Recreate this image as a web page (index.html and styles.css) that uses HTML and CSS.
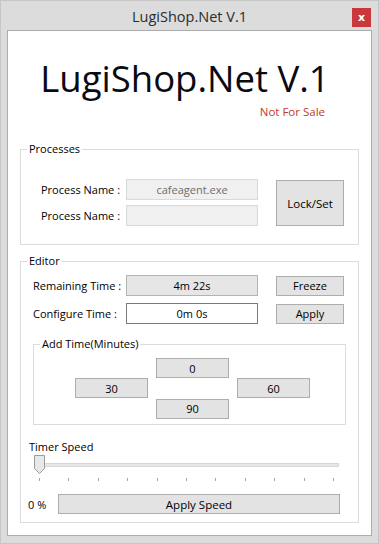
FILE: index.html
```html
<!DOCTYPE html>
<html lang="en">
<head>
    <meta charset="UTF-8">
    <meta name="viewport" content="width=device-width, initial-scale=1.0">
    <title>LugiShop.Net V.1</title>
    <link rel="stylesheet" href="styles.css">
</head>
<body>
    <div class="window">
        <div class="titlebar">
            <span></span>
            <span class="title">LugiShop.Net V.1</span>
            <button class="close">x</button>
        </div>
        <div class="client">
            <div class="brand">
                <h1>LugiShop.Net V.1</h1>
                <p class="note">Not For Sale</p>
            </div>

            <fieldset class="group processes">
                <legend>Processes</legend>
                <div class="proc-grid">
                    <label>Process Name :</label>
                    <input type="text" class="box readonly" value="cafeagent.exe" readonly>
                    <button class="btn lock">Lock/Set</button>
                    <label>Process Name :</label>
                    <input type="text" class="box readonly" value="" readonly>
                </div>
            </fieldset>

            <fieldset class="group editor">
                <legend>Editor</legend>
                <div class="edit-grid">
                    <label>Remaining Time :</label>
                    <input type="text" class="box shaded" value="4m 22s" readonly>
                    <button class="btn">Freeze</button>
                    <label>Configure Time :</label>
                    <input type="text" class="box white" value="0m 0s">
                    <button class="btn">Apply</button>
                </div>

                <fieldset class="group addtime">
                    <legend>Add Time(Minutes)</legend>
                    <div class="time-grid">
                        <button class="btn t0">0</button>
                        <button class="btn t30">30</button>
                        <button class="btn t60">60</button>
                        <button class="btn t90">90</button>
                    </div>
                </fieldset>

                <div class="speed-label">Timer Speed</div>
                <div class="slider">
                    <div class="track"></div>
                    <svg class="thumb" width="11" height="19" viewBox="0 0 11 19">
                        <path d="M0.5 0.5 H10.5 V13.5 L5.5 18.5 L0.5 13.5 Z" fill="#e8e8e8" stroke="#9a9a9a"/>
                    </svg>
                    <div class="ticks">
                        <span></span><span></span><span></span><span></span><span></span><span></span>
                        <span></span><span></span><span></span><span></span><span></span>
                    </div>
                </div>
                <div class="speed-row">
                    <span class="percent">0 %</span>
                    <button class="btn">Apply Speed</button>
                </div>
            </fieldset>
        </div>
    </div>
</body>
</html>
```

FILE: styles.css
```css
* {
    box-sizing: border-box;
}
body {
    margin: 0;
    font-family: "Open Sans", "Noto Sans", sans-serif;
    font-size: 11px;
    color: #000;
    background: #dcdcdc;
}
.window {
    width: 379px;
    height: 544px;
    border: 1px solid #c6c6c6;
    background: #dcdcdc;
    display: flex;
    flex-direction: column;
}
.titlebar {
    height: 29px;
    display: grid;
    grid-template-columns: 1fr auto 1fr;
    align-items: center;
}
.titlebar .title {
    font-size: 14.5px;
    color: #2b2b2b;
    padding-top: 1px;
}
.close {
    justify-self: end;
    width: 19px;
    height: 19px;
    margin: 3px 7px 0 0;
    padding: 0;
    border: none;
    background: #c8383d;
    color: #fff;
    font-family: "DejaVu Sans", sans-serif;
    font-size: 11px;
    font-weight: bold;
    line-height: 17px;
}
.client {
    flex: 1;
    margin: 0 6px 7px 6px;
    border: 1px solid #acacac;
    background: #fff;
}
.brand {
    display: flex;
    flex-direction: column;
    align-items: center;
    padding: 24px 9px 0 0;
}
.brand h1 {
    margin: 0;
    font-weight: 400;
    font-size: 36.5px;
    line-height: 46px;
    color: #0a0a12;
}
.brand .note {
    align-self: flex-end;
    margin: 3px 37px 0 0;
    color: #c0392b;
    font-size: 11.5px;
    line-height: 16px;
}
.group {
    border: 1px solid #dcdcdc;
    margin: 0;
    padding: 0;
    min-width: 0;
}
.group legend {
    padding: 0 2px;
    margin-left: 6px;
    line-height: 16px;
}
.processes {
    margin: 21px 12px 0 12px;
    padding: 22px 0 18px 0;
}
.proc-grid {
    display: grid;
    grid-template-columns: 85px 150px 68px;
    grid-template-rows: 21px 21px;
    row-gap: 5px;
    align-items: center;
    padding-left: 20px;
}
.proc-grid .box {
    width: 132px;
}
.proc-grid .lock {
    grid-column: 3;
    grid-row: 1 / 3;
    height: 46px;
    margin-top: 1px;
    font-size: 11.5px;
}
.box {
    height: 21px;
    width: 100%;
    padding: 0 4px;
    font: inherit;
    text-align: center;
    outline: none;
}
.box.readonly {
    background: #f0f0f0;
    border: 1px solid #d9d9d9;
    color: #6d6d6d;
}
.box.shaded {
    background: #e6e6e6;
    border: 1px solid #b4b4b4;
    color: #000;
}
.box.white {
    background: #fff;
    border: 1px solid #7a7a7a;
    color: #000;
}
.btn {
    height: 20px;
    padding: 0;
    background: #e3e3e3;
    border: 1px solid #adadad;
    font: inherit;
    color: #000;
}
.editor {
    margin: 8px 12px 0 12px;
    padding: 6px 13px 8px 0;
}
.edit-grid {
    display: grid;
    grid-template-columns: 93px 150px 68px;
    grid-template-rows: 21px 21px;
    row-gap: 7px;
    align-items: center;
    padding-left: 12px;
}
.edit-grid .box {
    width: 132px;
}
.addtime {
    margin: 12px 0 0 12px;
    width: 313px;
    padding: 6px 0 5px 0;
}
.time-grid {
    display: grid;
    grid-template-columns: 73px 73px 73px;
    grid-template-rows: repeat(6, 10.2px);
    column-gap: 8px;
    padding-left: 41px;
}
.time-grid .btn {
    height: 20px;
}
.t0 { grid-column: 2; grid-row: 1 / 3; }
.t30 { grid-column: 1; grid-row: 3 / 5; }
.t60 { grid-column: 3; grid-row: 3 / 5; }
.t90 { grid-column: 2; grid-row: 5 / 7; }
.speed-label {
    margin: 14px 0 0 8px;
    line-height: 16px;
}
.slider {
    position: relative;
    margin: 0 0 0 13px;
    padding-top: 8px;
    width: 306px;
    height: 26px;
}
.track {
    margin-left: 5px;
    width: 300px;
    height: 4px;
    background: #e7e7e7;
    border: 1px solid #d6d6d6;
}
.thumb {
    position: absolute;
    left: 0;
    top: 0;
}
.ticks {
    display: flex;
    justify-content: space-between;
    margin: 11px 0 0 5px;
    width: 295px;
}
.ticks span {
    width: 1px;
    height: 3px;
    background: #a8a8a8;
}
.speed-row {
    display: grid;
    grid-template-columns: 30px 282px;
    align-items: center;
    margin-top: 13px;
    padding-left: 7px;
}
.speed-row .btn {
    height: 20px;
    font-size: 11.5px;
}
```
